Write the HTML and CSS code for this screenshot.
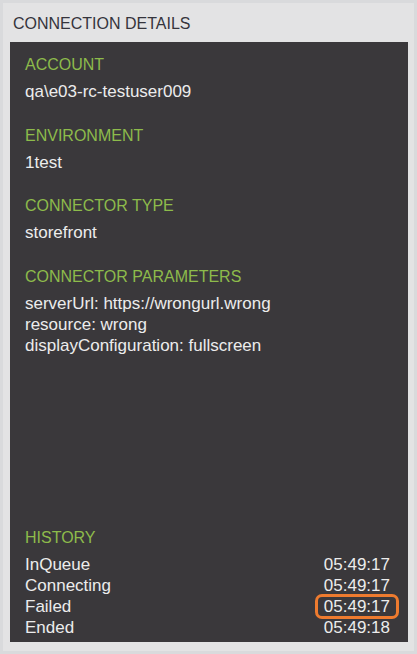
FILE: index.html
```html
<!DOCTYPE html>
<html>
<head>
<meta charset="utf-8">
<link rel="stylesheet" href="styles.css">
</head>
<body>
<div class="frame">
  <div class="title">CONNECTION DETAILS</div>
  <div class="panel">
    <div class="section">
      <div class="label">ACCOUNT</div>
      <div class="value">qa\e03-rc-testuser009</div>
    </div>
    <div class="section">
      <div class="label">ENVIRONMENT</div>
      <div class="value">1test</div>
    </div>
    <div class="section">
      <div class="label">CONNECTOR TYPE</div>
      <div class="value">storefront</div>
    </div>
    <div class="section">
      <div class="label">CONNECTOR PARAMETERS</div>
      <div class="value">serverUrl: https://wrongurl.wrong</div>
      <div class="value">resource: wrong</div>
      <div class="value">displayConfiguration: fullscreen</div>
    </div>
    <div class="section history">
      <div class="label">HISTORY</div>
      <div class="row"><span>InQueue</span><span>05:49:17</span></div>
      <div class="row"><span>Connecting</span><span>05:49:17</span></div>
      <div class="row"><span>Failed</span><span class="marked">05:49:17</span></div>
      <div class="row"><span>Ended</span><span>05:49:18</span></div>
    </div>
  </div>
</div>
</body>
</html>
```
FILE: styles.css
```css
html, body {
  margin: 0;
  padding: 0;
}
body {
  background: #d9dadc;
  width: 417px;
  height: 654px;
  font-family: "Liberation Sans", Arial, sans-serif;
  font-size: 16px;
  line-height: 21px;
  overflow: hidden;
}
.frame {
  margin: 3px;
  height: 648px;
  box-sizing: border-box;
  background: #e3e3e4;
  padding: 10px 6px 9px 7px;
  display: flex;
  flex-direction: column;
}
.title {
  color: #35343c;
  padding-left: 3px;
  margin-bottom: 8px;
}
.panel {
  flex: 1;
  background: #3a383b;
  padding: 12px 18px 4px 15px;
  display: flex;
  flex-direction: column;
}
.section {
  margin-bottom: 22.5px;
}
.label {
  color: #8dbb4b;
  margin-bottom: 6px;
}
.value {
  color: #ececec;
  font-size: 17px;
}
.history {
  margin-top: auto;
  margin-bottom: 0;
}
.row {
  display: flex;
  justify-content: space-between;
  color: #ececec;
  font-size: 17px;
}
.marked {
  position: relative;
}
.marked::after {
  content: "";
  position: absolute;
  left: -9px;
  right: -9px;
  top: -2px;
  bottom: -2px;
  border: 3px solid #ee7b2f;
  border-radius: 7px;
}
```
